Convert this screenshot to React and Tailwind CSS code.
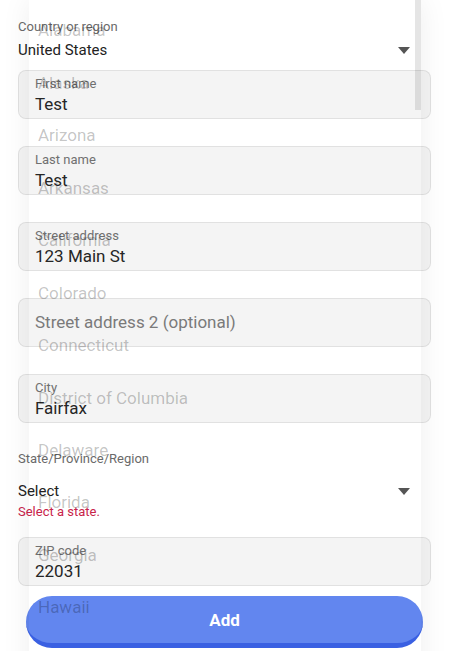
import React from "react";

const states = [
  "Alabama",
  "Alaska",
  "Arizona",
  "Arkansas",
  "California",
  "Colorado",
  "Connecticut",
  "District of Columbia",
  "Delaware",
  "Florida",
  "Georgia",
  "Hawaii",
];

const Caret = () => (
  <svg width="12" height="7" viewBox="0 0 12 7" className="mr-[21px]">
    <path d="M0 0 L12 0 L6 7 Z" fill="#555" />
  </svg>
);

const Field = ({ label, value, placeholder, className = "" }) => (
  <div
    className={`h-[49px] rounded-[8px] border border-black/[0.08] bg-black/[0.045] px-[16px] ${className}`}
  >
    {placeholder ? (
      <div className="flex h-full items-center text-[17px] text-[#7a7a7a]">
        {placeholder}
      </div>
    ) : (
      <>
        <div className="pt-[5px] text-[13px] leading-[15px] text-[#707070]">
          {label}
        </div>
        <div className="mt-[3px] text-[17px] leading-[20px] text-[#262626]">
          {value}
        </div>
      </>
    )}
  </div>
);

export default function App() {
  return (
    <div
      className="relative h-[651px] w-[449px] overflow-hidden bg-white"
      style={{ fontFamily: "Roboto, 'Noto Sans', sans-serif" }}
    >
      {/* form */}
      <div className="px-[18px] pt-[19px]">
        <div className="text-[13px] leading-[16px] text-[#6a6a6a]">
          Country or region
        </div>
        <div className="mt-[5px] flex items-center justify-between">
          <span className="text-[15px] leading-[20px] text-[#222]">
            United States
          </span>
          <Caret />
        </div>

        <Field label="First name" value="Test" className="mt-[10px]" />
        <Field label="Last name" value="Test" className="mt-[27px]" />
        <Field label="Street address" value="123 Main St" className="mt-[27px]" />
        <Field placeholder="Street address 2 (optional)" className="mt-[27px]" />
        <Field label="City" value="Fairfax" className="mt-[27px]" />

        <div className="mt-[28px] text-[13px] leading-[16px] text-[#6a6a6a]">
          State/Province/Region
        </div>
        <div className="mt-[14px] flex items-center justify-between">
          <span className="text-[15px] leading-[20px] text-[#222]">Select</span>
          <Caret />
        </div>
        <div className="mt-[3px] text-[13px] leading-[16px] text-[#c8234a]">
          Select a state.
        </div>

        <Field label="ZIP code" value="22031" className="mt-[17px]" />
      </div>

      <div className="mx-[26px] mt-[10px] flex h-[52px] items-center justify-center rounded-full border-b-[5px] border-[#3a60e2] bg-[#6286ef] pt-[3px] text-[17px] font-bold text-white">
        Add
      </div>

      {/* state list overlay */}
      <div className="pointer-events-none absolute left-[29px] top-0 z-10 h-[700px] w-[392px] shadow-[0_0_28px_rgba(0,0,0,0.07)]">
        <div className="pt-[5px]">
          {states.map((s) => (
            <div
              key={s}
              className="flex h-[52.45px] items-center pl-[9px] text-[17px] text-black/[0.24]"
            >
              {s}
            </div>
          ))}
        </div>
        <div className="absolute right-0 top-0 h-[110px] w-[6px] bg-black/[0.1]" />
      </div>
    </div>
  );
}
